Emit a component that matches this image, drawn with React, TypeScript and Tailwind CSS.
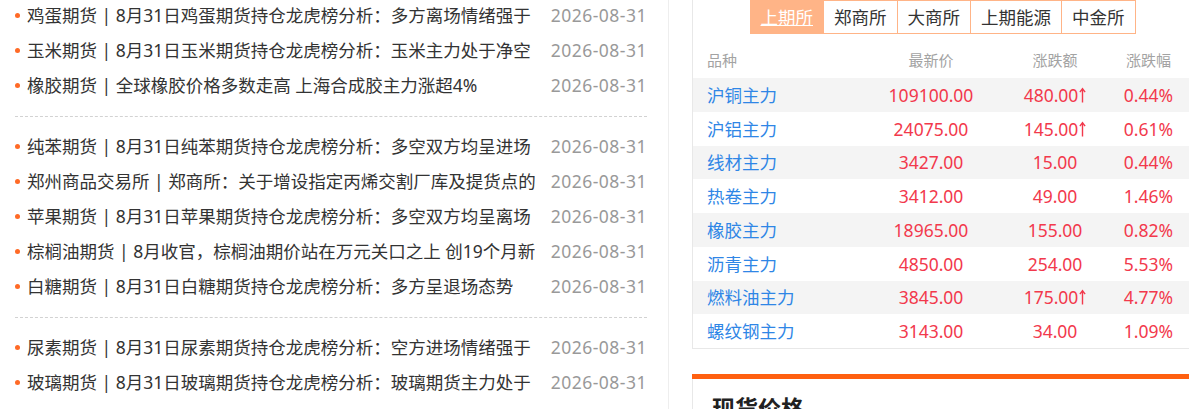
const FONT = "font-['Noto_Sans','Noto_Sans_CJK_SC',sans-serif]";

const newsGroups: [string, string][][] = [
  [
    ["鸡蛋期货", "8月31日鸡蛋期货持仓龙虎榜分析：多方离场情绪强于"],
    ["玉米期货", "8月31日玉米期货持仓龙虎榜分析：玉米主力处于净空"],
    ["橡胶期货", "全球橡胶价格多数走高 上海合成胶主力涨超4%"],
  ],
  [
    ["纯苯期货", "8月31日纯苯期货持仓龙虎榜分析：多空双方均呈进场"],
    ["郑州商品交易所", "郑商所：关于增设指定丙烯交割厂库及提货点的"],
    ["苹果期货", "8月31日苹果期货持仓龙虎榜分析：多空双方均呈离场"],
    ["棕榈油期货", "8月收官，棕榈油期价站在万元关口之上 创19个月新"],
    ["白糖期货", "8月31日白糖期货持仓龙虎榜分析：多方呈退场态势"],
  ],
  [
    ["尿素期货", "8月31日尿素期货持仓龙虎榜分析：空方进场情绪强于"],
    ["玻璃期货", "8月31日玻璃期货持仓龙虎榜分析：玻璃期货主力处于"],
  ],
];

const tabs = ["上期所", "郑商所", "大商所", "上期能源", "中金所"];

const quotes = [
  { name: "沪铜主力", price: "109100.00", change: "480.00", up: true, pct: "0.44%" },
  { name: "沪铝主力", price: "24075.00", change: "145.00", up: true, pct: "0.61%" },
  { name: "线材主力", price: "3427.00", change: "15.00", up: false, pct: "0.44%" },
  { name: "热卷主力", price: "3412.00", change: "49.00", up: false, pct: "1.46%" },
  { name: "橡胶主力", price: "18965.00", change: "155.00", up: false, pct: "0.82%" },
  { name: "沥青主力", price: "4850.00", change: "254.00", up: false, pct: "5.53%" },
  { name: "燃料油主力", price: "3845.00", change: "175.00", up: true, pct: "4.77%" },
  { name: "螺纹钢主力", price: "3143.00", change: "34.00", up: false, pct: "1.09%" },
];

const UpArrow = () => (
  <svg width="7" height="16" viewBox="0 0 7 16" className="ml-[1px] inline-block" fill="none">
    <path d="M3.5 15.5V2M0.9 5.2L3.5 1.6L6.1 5.2" stroke="currentColor" strokeWidth="1.4" />
  </svg>
);

const NewsList = () => (
  <div className="-mt-[2px] flex flex-col">
    {newsGroups.map((group, gi) => (
      <ul
        key={gi}
        className={`flex flex-col border-b border-dashed border-[#d2d2d2] pb-[13px] ${gi === 0 ? "" : "pt-[12px]"}`}
      >
        {group.map(([cat, title]) => (
          <li key={title} className="flex h-[35px] items-center">
            <span className="mr-[7px] size-[5px] shrink-0 rounded-full bg-[#ff6a26]" />
            <span className="flex-1 overflow-hidden whitespace-nowrap text-[#333]">
              {cat} | {title}
            </span>
            <span className="ml-4 shrink-0 tracking-[0.5px] text-[#999]">2026-08-31</span>
          </li>
        ))}
      </ul>
    ))}
  </div>
);

const QuoteTable = () => (
  <div className="border-b border-l border-[#e8e8e8]">
    <div className="flex h-[34px] justify-center">
      {tabs.map((t, i) => (
        <span
          key={t}
          className={`flex items-center border border-[#ffb487] px-[10px] ${
            i === 0 ? "bg-[#ffb487] text-white underline" : "-ml-px bg-white text-[#333]"
          }`}
        >
          {t}
        </span>
      ))}
    </div>

    <div className="flex h-[44px] items-center pt-[8px] text-[15px] text-[#a3a3a3]">
      <span className="flex-1 pl-[14px]">品种</span>
      <span className="w-[122px] text-center">最新价</span>
      <span className="w-[126px] text-center">涨跌额</span>
      <span className="w-[61px] text-center">涨跌幅</span>
      <span className="w-[13px]" />
    </div>

    {quotes.map((q, i) => (
      <div
        key={q.name}
        className={`flex h-[33.75px] items-center ${i % 2 === 0 ? "bg-[#f4f4f4]" : "bg-white"}`}
      >
        <span className="flex-1 pl-[14px] text-[#2f86e6]">{q.name}</span>
        <span className="w-[122px] text-center text-[#f2394c]">{q.price}</span>
        <span className="flex w-[126px] items-center justify-center text-[#f2394c]">
          {q.change}
          {q.up && <UpArrow />}
        </span>
        <span className="w-[61px] text-center text-[#f2394c]">{q.pct}</span>
        <span className="w-[13px]" />
      </div>
    ))}
  </div>
);

export default function App() {
  return (
    <div className={`flex h-[409px] w-[1189px] overflow-hidden bg-white text-[17.5px] ${FONT}`}>
      <section className="w-[669px] shrink-0 border-r border-[#eee] pl-[15px] pr-[21px]">
        <NewsList />
      </section>

      <aside className="ml-[23px] w-[500px] shrink-0">
        <QuoteTable />

        <div className="mt-[25px]">
          <div className="h-[5px] bg-[#ff6010]" />
          <div className="h-[60px] border-l border-[#e8e8e8] pl-[19px] pt-[14px]">
            <h2 className="text-[23px] font-bold leading-[30px] text-[#222]">现货价格</h2>
          </div>
        </div>
      </aside>
    </div>
  );
}
